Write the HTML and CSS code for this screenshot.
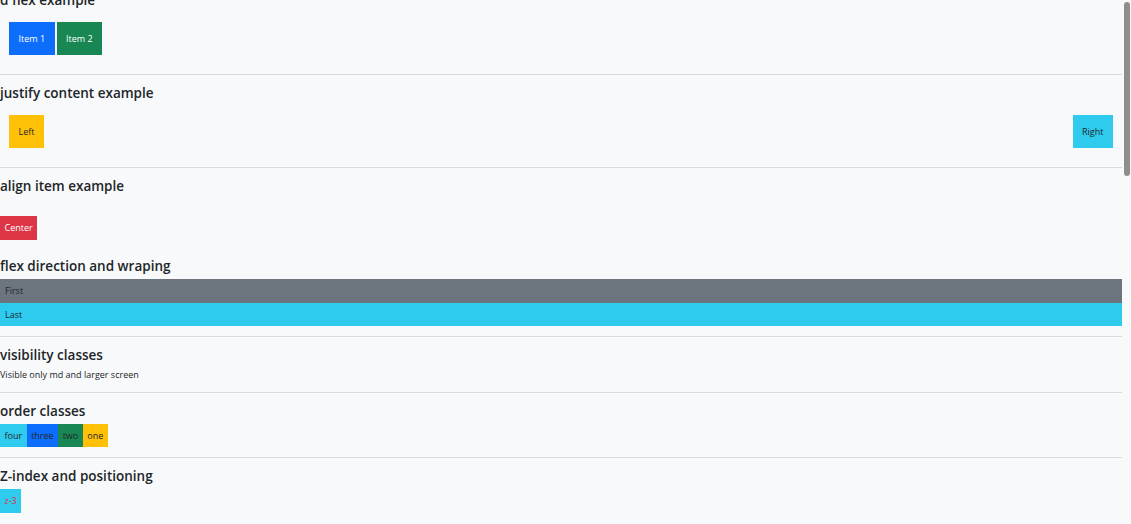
FILE: index.html
```html
<!DOCTYPE html>
<html lang="en">
<head>
<meta charset="utf-8">
<title>Flex utilities</title>
<link rel="stylesheet" href="styles.css">
</head>
<body>
<main class="page">
  <section class="sec">
    <h5 class="title title-first">d flex example</h5>
    <div class="flex pad">
      <div class="box-lg bg-blue t-white">Item 1</div>
      <div class="box-lg bg-green t-white">Item 2</div>
    </div>
  </section>
  <hr class="rule">
  <section class="sec">
    <h5 class="title">justify content example</h5>
    <div class="flex pad between">
      <div class="box-lg bg-yellow">Left</div>
      <div class="box-lg bg-cyan">Right</div>
    </div>
  </section>
  <hr class="rule">
  <section class="sec">
    <h5 class="title">align item example</h5>
    <div class="flex align-center">
      <div class="box-sm bg-red t-white">Center</div>
    </div>
    <h5 class="title title-tight">flex direction and wraping</h5>
    <div class="flex col">
      <div class="row bg-gray">First</div>
      <div class="row bg-cyan">Last</div>
    </div>
  </section>
  <hr class="rule">
  <section class="sec">
    <h5 class="title">visibility classes</h5>
    <p class="note">Visible only md and larger screen</p>
  </section>
  <hr class="rule">
  <section class="sec">
    <h5 class="title">order classes</h5>
    <div class="flex">
      <div class="box-sm bg-yellow order-4">one</div>
      <div class="box-sm bg-green order-3">two</div>
      <div class="box-sm bg-blue order-2">three</div>
      <div class="box-sm bg-cyan order-1">four</div>
    </div>
  </section>
  <hr class="rule">
  <section class="sec sec-last">
    <h5 class="title">Z-index and positioning</h5>
    <div class="zwrap">
      <div class="box-sm bg-cyan t-red zbox">z-3</div>
    </div>
  </section>
</main>
<div class="scrollbar" aria-hidden="true"><div class="thumb"></div></div>
</body>
</html>
```
FILE: styles.css
```css
html {
  background: #f8f9fa;
}

body {
  margin: 0;
  background: #f8f9fa;
  color: #212529;
  font-family: "Open Sans", "Noto Sans", sans-serif;
  font-size: 9px;
  line-height: 13.5px;
}

.page {
  display: block;
  margin-right: 9px;
}

.scrollbar {
  position: fixed;
  top: 0;
  right: 0;
  width: 9px;
  height: 100%;
  background: #f8f9fa;
}

.thumb {
  margin: 2px 1px 0 2px;
  height: 174px;
  border-radius: 3px;
  background: #8e8e8e;
}

.title {
  font-size: 13.5px;
  line-height: 17px;
  font-weight: 600;
  margin: 10px 0 4px;
}

.title-first {
  margin-top: -8px;
}

.title-tight {
  margin-top: 1px;
}

.rule {
  margin: 10px 0 0;
  border: 0;
  border-top: 1px solid #d9dbde;
  height: 0;
}

.flex {
  display: flex;
}

.pad {
  padding: 9px;
  gap: 2px;
}

.between {
  justify-content: space-between;
}

.align-center {
  align-items: center;
  height: 58px;
}

.col {
  flex-direction: column;
}

.box-lg {
  padding: 9.75px 9.5px;
}

.box-sm {
  padding: 5px 4.5px;
}

.row {
  padding: 5px;
}

.note {
  margin: 2px 0 1px;
}

.order-1 { order: 1; }
.order-2 { order: 2; }
.order-3 { order: 3; }
.order-4 { order: 4; }

.zwrap {
  position: relative;
  display: flex;
  align-items: flex-start;
  padding-bottom: 40px;
}

.zbox {
  position: relative;
  z-index: 3;
}

.bg-blue { background: #0d6efd; }
.bg-green { background: #198754; }
.bg-yellow { background: #ffc107; }
.bg-cyan { background: #2ecbef; }
.bg-red { background: #dc3545; }
.bg-gray { background: #6c757d; }

.t-white { color: #fff; }
.t-red { color: #dc3545; }
```
